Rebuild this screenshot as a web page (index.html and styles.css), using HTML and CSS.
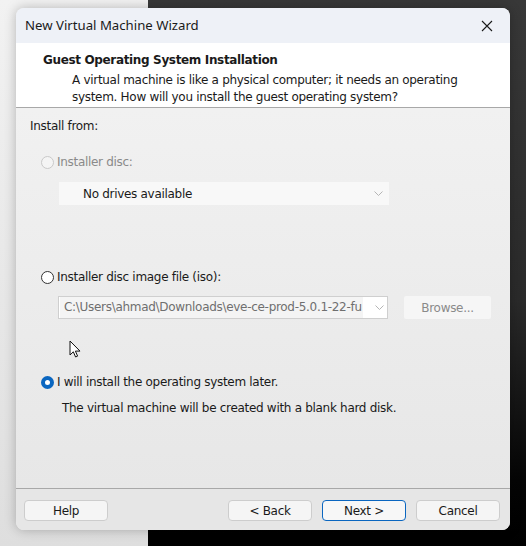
FILE: index.html
```html
<!DOCTYPE html>
<html>
<head>
<meta charset="utf-8">
<link rel="stylesheet" href="styles.css">
</head>
<body>
<div class="dialog">
  <div class="titlebar">
    <span class="title">New Virtual Machine Wizard</span>
    <svg class="close" width="12" height="12" viewBox="0 0 12 12"><path d="M1 1L11 11M11 1L1 11" stroke="#1a1a1a" stroke-width="1.1" fill="none"/></svg>
  </div>
  <div class="header">
    <div class="h-title">Guest Operating System Installation</div>
    <div class="h-desc">A virtual machine is like a physical computer; it needs an operating<br>system. How will you install the guest operating system?</div>
  </div>
  <div class="content">
    <div class="label">Install from:</div>
    <div class="radio-row disabled r1"><span class="radio"></span><span>Installer disc:</span></div>
    <div class="combo flat c1"><span class="combo-text">No drives available</span><svg class="chev" width="9" height="5" viewBox="0 0 9 5"><path d="M0.5 0.5L4.5 4.5L8.5 0.5" stroke="#b5b5b5" fill="none"/></svg></div>
    <div class="radio-row r2"><span class="radio"></span><span>Installer disc image file (iso):</span></div>
    <div class="iso-row">
      <div class="combo boxed"><span class="combo-text path">C:\Users\ahmad\Downloads\eve-ce-prod-5.0.1-22-fu</span><svg class="chev" width="9" height="5" viewBox="0 0 9 5"><path d="M0.5 0.5L4.5 4.5L8.5 0.5" stroke="#b5b5b5" fill="none"/></svg></div>
      <div class="browse">Browse...</div>
    </div>
    <div class="radio-row r3"><span class="radio checked"></span><span>I will install the operating system later.</span></div>
    <div class="note">The virtual machine will be created with a blank hard disk.</div>
    <svg class="cursor" width="13" height="19" viewBox="0 0 13 19"><path d="M1 1L1 15L4.3 11.8L6.6 17L8.6 16.1L6.4 11.1L11 11.1Z" fill="#fff" stroke="#111" stroke-width="1" stroke-linejoin="round"/></svg>
  </div>
  <div class="footer">
    <div class="btn">Help</div>
    <div class="spacer"></div>
    <div class="btn">&lt; Back</div>
    <div class="btn primary">Next &gt;</div>
    <div class="btn">Cancel</div>
  </div>
</div>
</body>
</html>
```
FILE: styles.css
```css
html, body {
  margin: 0;
  padding: 0;
}
body {
  width: 526px;
  height: 546px;
  overflow: hidden;
  background:
    linear-gradient(to bottom, #f2f2f2, #dedede) 0 0 / 148px 100% no-repeat,
    linear-gradient(to bottom, #383838 0, #2a2a2a 300px, #050505 480px, #000 100%);
  font-family: "DejaVu Sans", sans-serif;
  font-size: 12px;
  letter-spacing: -0.3px;
  color: #1a1a1a;
  padding-top: 8px;
  box-sizing: border-box;
}
.dialog {
  margin-left: 16px;
  width: 494px;
  height: 522px;
  border-radius: 8px;
  overflow: hidden;
  display: flex;
  flex-direction: column;
  box-shadow: 0 0 12px rgba(0,0,0,0.25);
  background: #f0f0f0;
  position: relative;
}
.titlebar {
  height: 35px;
  flex: none;
  background: #eef1f7;
  display: flex;
  align-items: center;
  padding: 0 11px 0 9px;
  box-sizing: border-box;
}
.title {
  font-family: "Noto Sans", sans-serif;
  font-size: 13.2px;
  letter-spacing: 0;
  color: #1a1a1a;
  flex: 1;
  padding-bottom: 1px;
}
.close {
  margin-right: 6px;
}
.header {
  height: 65px;
  flex: none;
  background: #fff;
  border-bottom: 1px solid #a8a8a8;
  box-sizing: border-box;
  padding: 9px 0 0 27px;
}
.h-title {
  font-weight: bold;
  line-height: 16px;
  letter-spacing: -0.35px;
}
.h-desc {
  margin: 4px 0 0 29px;
  line-height: 17px;
}
.content {
  flex: 1;
  background: linear-gradient(to bottom, #f1f1f1, #e7e7e7);
  border-bottom: 1px solid #a8a8a8;
  padding: 10px 0 0 14px;
  display: flex;
  flex-direction: column;
  align-items: flex-start;
  position: relative;
}
.label {
  line-height: 16px;
}
.radio-row {
  display: flex;
  align-items: center;
  height: 16px;
  margin-left: 11px;
  gap: 3px;
}
.r1 { margin-top: 20px; }
.r2 { margin-top: 64px; }
.r3 { margin-top: 55px; }
.radio {
  width: 13px;
  height: 13px;
  border-radius: 50%;
  box-sizing: border-box;
  border: 1px solid #333;
  background: #fff;
  flex: none;
}
.disabled { color: #8a8a8a; }
.disabled .radio {
  border-color: #c9c9c9;
  background: #f4f4f4;
}
.radio.checked {
  border: 4px solid #0a66c0;
  background: #fff;
}
.combo {
  display: flex;
  align-items: center;
  box-sizing: border-box;
  width: 330px;
}
.combo-text { flex: 1; }
.chev { margin-right: 6px; flex: none; }
.flat {
  margin: 12px 0 0 29px;
  height: 23px;
  background: #f8f8f8;
  padding-left: 24px;
}
.iso-row {
  margin: 11px 0 0 28px;
  display: flex;
  gap: 16px;
}
.boxed {
  height: 23px;
  background: #fff;
  border: 1px solid #cfcfcf;
  padding-left: 5px;
}
.path {
  color: #6f6f6f;
  background: #f4f4f4;
  flex: none;
  width: 299px;
  white-space: nowrap;
  overflow: hidden;
  line-height: 21px;
  margin-right: 12px;
  margin-left: -4px;
  padding-left: 4px;
}
.boxed .chev { margin-right: 3px; }
.browse {
  width: 87px;
  height: 23px;
  background: #f6f6f6;
  color: #8a8a8a;
  display: flex;
  align-items: center;
  justify-content: center;
  border-radius: 2px;
}
.note {
  margin: 10px 0 0 32px;
  line-height: 16px;
}
.cursor {
  position: absolute;
  left: 53px;
  top: 232px;
}
.footer {
  height: 41px;
  flex: none;
  background: #e6e6e6;
  display: flex;
  align-items: flex-start;
  padding: 11px 10px 0 8px;
  box-sizing: border-box;
  gap: 10px;
}
.spacer { flex: 1; }
.btn {
  width: 84px;
  height: 21px;
  box-sizing: border-box;
  border: 1px solid #cdcdcd;
  border-radius: 4px;
  background: #f5f5f5;
  display: flex;
  align-items: center;
  justify-content: center;
  color: #1a1a1a;
}
.btn.primary {
  border-color: #0a66c0;
  background: #f7f7f7;
}
```
